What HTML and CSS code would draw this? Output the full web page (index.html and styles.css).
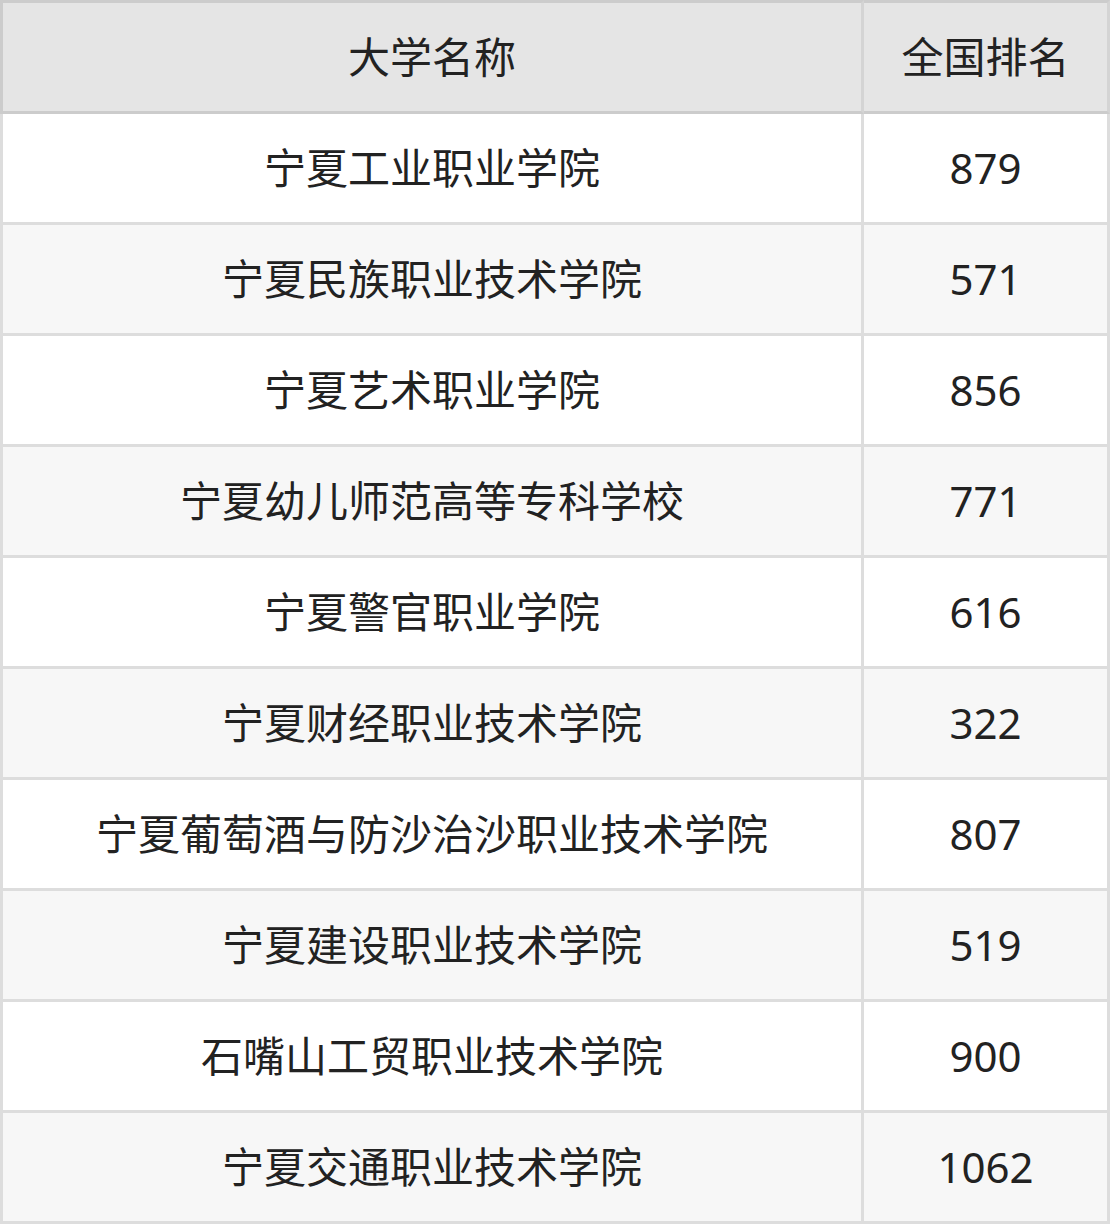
FILE: index.html
```html
<!DOCTYPE html>
<html lang="zh">
<head>
<meta charset="utf-8">
<link rel="stylesheet" href="styles.css">
</head>
<body>
<table class="rank">
  <colgroup><col class="c-name"><col class="c-rank"></colgroup>
  <thead>
    <tr><th>大学名称</th><th>全国排名</th></tr>
  </thead>
  <tbody>
    <tr><td>宁夏工业职业学院</td><td>879</td></tr>
    <tr><td>宁夏民族职业技术学院</td><td>571</td></tr>
    <tr><td>宁夏艺术职业学院</td><td>856</td></tr>
    <tr><td>宁夏幼儿师范高等专科学校</td><td>771</td></tr>
    <tr><td>宁夏警官职业学院</td><td>616</td></tr>
    <tr><td>宁夏财经职业技术学院</td><td>322</td></tr>
    <tr><td>宁夏葡萄酒与防沙治沙职业技术学院</td><td>807</td></tr>
    <tr><td>宁夏建设职业技术学院</td><td>519</td></tr>
    <tr><td>石嘴山工贸职业技术学院</td><td>900</td></tr>
    <tr><td>宁夏交通职业技术学院</td><td>1062</td></tr>
  </tbody>
</table>
</body>
</html>
```

FILE: styles.css
```css
html, body {
  margin: 0;
  padding: 0;
  background: #ffffff;
}

.rank {
  width: 1110px;
  table-layout: fixed;
  border-collapse: separate;
  border-spacing: 0;
  font-family: "Noto Sans", "Noto Sans CJK SC", sans-serif;
  font-size: 42px;
  color: #222222;
}

.c-name { width: 864px; }
.c-rank { width: 246px; }

.rank th,
.rank td {
  box-sizing: border-box;
  padding: 0;
  text-align: center;
  vertical-align: middle;
  font-weight: normal;
  line-height: 1;
  white-space: nowrap;
}

.rank th {
  height: 114px;
  background: #e5e5e5;
  border-top: 3px solid #cccccc;
  border-bottom: 3px solid #cccccc;
  border-right: 3px solid #d4d4d4;
}

.rank th:first-child {
  border-left: 3px solid #cccccc;
}

.rank td {
  height: 111px;
  background: #ffffff;
  border-bottom: 3px solid #dddddd;
  border-right: 3px solid #dddddd;
}

.rank td:first-child {
  border-left: 3px solid #dddddd;
}

.rank tbody tr:nth-child(even) td {
  background: #f7f7f7;
}
```
